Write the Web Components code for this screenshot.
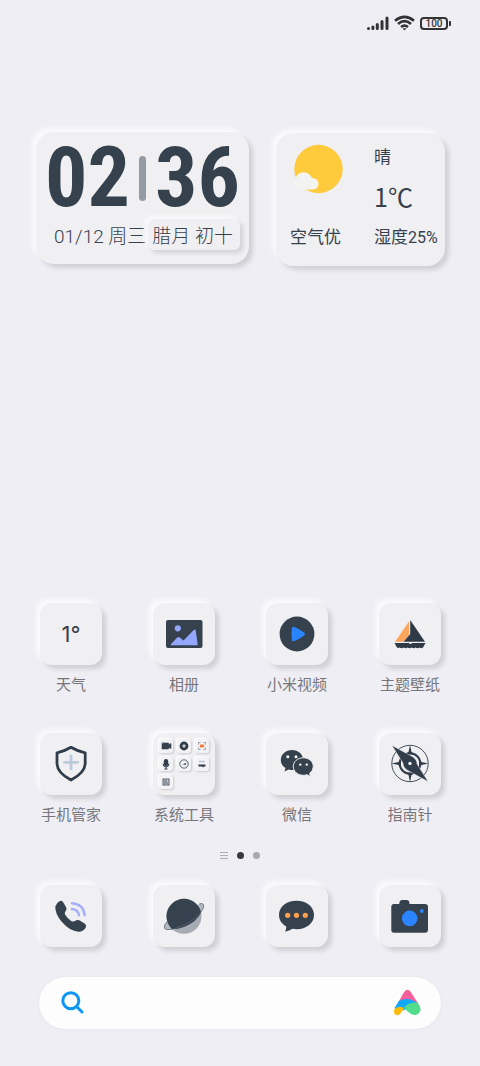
<!DOCTYPE html>
<html lang="zh-CN">
<head>
<meta charset="utf-8">
<meta name="viewport" content="width=device-width, initial-scale=1">
<title>主屏幕</title>
<style>
  html, body { margin: 0; }
  body {
    --ink: #36414e;
    --surface: #f0f0f2;
    --raised: 4px 4px 4px rgba(40, 40, 50, .15), -4px -4px 4px #fafafc;
    background: #efeef4;
    color: var(--ink);
    font-family: Roboto, "Noto Sans CJK SC", sans-serif;
  }
</style>
</head>
<body>
<home-screen>
  <status-bar slot="status" battery="100"></status-bar>
  <clock-widget slot="widgets" hours="02" minutes="36" date="01/12 周三" lunar="腊月 初十"></clock-widget>
  <weather-widget slot="widgets" sky="晴" temp="1℃" air="空气优" humidity="25%"></weather-widget>

  <app-tile slot="apps" label="天气"><span>1°</span></app-tile>
  <app-tile slot="apps" label="相册">
    <svg viewBox="0 0 62 62"><rect x="13" y="17" width="36.5" height="28" rx="2" fill="#36414e"/><circle cx="24.8" cy="25.3" r="3.1" fill="#93a6fb"/><path d="M17.7 41.5 24 34.7q1.3-1.3 2.8-.2l3.7 3L41 26.8q1.3-1 1.7.6l2 14.1q0 .8-.8.8H18.3q-1-.1-.6-.8Z" fill="#93a6fb"/></svg>
  </app-tile>
  <app-tile slot="apps" label="小米视频">
    <svg viewBox="0 0 62 62"><circle cx="31" cy="31" r="17.4" fill="#36414e"/><path d="M25.8 25.5q.1-2.5 2.4-1.6 5.500 2 10 5.600 1.600 1.500 0 3-4.500 3.600-10 5.600-2.300.9-2.400-1.600-.5-5.500 0-11Z" fill="#2b84ff"/></svg>
  </app-tile>
  <app-tile slot="apps" label="主题壁纸">
    <svg viewBox="0 0 62 62"><path d="M30 18.500V32L24.600 38.800H16Z" fill="#ffa55c"/><path d="M31.200 17 46 38.800H24.600L31.200 31Z" fill="#2f3a47"/><path d="M15.500 40H30.500V41H32.500V40H46.500L44 44.500q-2 1.300-3.500 0-1.800 1.600-4 0-1.800 1.600-4 0-1.800 1.600-4 0-1.800 1.600-4 0-1.800 1.600-4 0-1.500.8-2.500 0Z" fill="#2f3a47"/></svg>
  </app-tile>
  <app-tile slot="apps" label="手机管家">
    <svg viewBox="0 0 62 62" fill="none" stroke-linejoin="round"><path d="M31 14.300Q37.500 18.300 45.200 19.800V31Q44.500 40 31 47 17.500 40 17 31V19.800Q24.500 18.300 31 14.300Z" stroke="#303c4a" stroke-width="2.800"/><path d="M31 21.700V37M23.300 29.300H38.700" stroke="#bccbdc" stroke-width="2.800"/></svg>
  </app-tile>
  <app-tile slot="apps" label="系统工具">
    <mini-grid>
      <svg viewBox="0 0 14 14"><path d="M3 4H9.500V5.500L12 4.500V9.500L9.500 8.500V10H3Z" fill="#36414e" stroke="#36414e" stroke-width=".6"/><path d="M3 4H5" stroke="#7c8fa5"/></svg>
      <svg viewBox="0 0 14 14"><circle cx="7" cy="7" r="4.400" fill="#303c4a"/><path d="M7 5.200V8.800M5.200 7H8.800" stroke="#eef0f3" stroke-width="1.200"/></svg>
      <svg viewBox="0 0 14 14"><path d="M3.500 5.500V3.500H5.500M8.500 3.500H10.500V5.500M10.500 8.500V10.500H8.500M5.500 10.500H3.500V8.500" fill="none" stroke="#8896a5" stroke-width=".9"/><rect x="4.800" y="5.500" width="4.400" height="3" rx="1" fill="#f07a35"/></svg>
      <svg viewBox="0 0 14 14"><rect x="4.800" y="2" width="4.400" height="7.200" rx="2.200" fill="#303c4a"/><path d="M4 6.500Q4 10 7 10T10 6.500M7 10V12M5.500 12H8.500" fill="none" stroke="#303c4a"/></svg>
      <svg viewBox="0 0 14 14"><circle cx="7" cy="7" r="4.200" fill="none" stroke="#4a5664" stroke-width=".9"/><path d="M4.800 8.200 9.400 5.600 8.400 8.200 7 7.500Z" fill="#303c4a"/></svg>
      <svg viewBox="0 0 14 14"><path d="M4 4.500H10" stroke="#b9c6d5" stroke-width="1.500"/><path d="M3.500 7.500H10.500V9.500H9L8 10.500 7 9.500H3.500Z" fill="#303c4a"/></svg>
      <svg viewBox="0 0 14 14"><rect x="4" y="4" width="6" height="6" fill="#c7cbd0" stroke="#4a5664" stroke-width=".9"/><path d="M5 6H8M5 8H9" stroke="#4a5664" stroke-width=".9"/></svg>
    </mini-grid>
  </app-tile>
  <app-tile slot="apps" label="微信">
    <svg viewBox="0 0 62 62"><path d="M26 17C19.500 17 14.800 21.500 14.800 27 14.800 30.500 16.600 33.300 19.500 35L18.500 38.500 22.500 36.400Q27 37.600 30.500 36.500 37 34 37.300 27C37 21.300 32.300 17 26 17Z" fill="#36414e"/><path d="M37.300 24.800C31.500 24.800 27.300 28.600 27.300 33.500 27.300 38.500 31.700 42.300 37.300 42.300Q39.300 42.300 41 41.700L44.300 43.700 43.700 40.300Q47.300 37.600 47.300 33.500C47.300 28.600 43 24.800 37.300 24.800Z" fill="#36414e" stroke="#f0f0f2" stroke-width="1"/><g fill="#fff"><circle cx="21.800" cy="23.700" r="1.500"/><circle cx="30" cy="23.700" r="1.500"/><circle cx="34.300" cy="31.600" r="1.200"/><circle cx="40.800" cy="31.600" r="1.200"/></g></svg>
  </app-tile>
  <app-tile slot="apps" label="指南针">
    <svg viewBox="0 0 62 62"><g fill="none" stroke="#303c4a"><circle cx="31" cy="30.500" r="18.200" stroke-width=".9"/><circle cx="31" cy="30.500" r="10.300" stroke-width="2"/></g><path d="M31 12 32.500 19 36 21.500H26L29.500 19ZM31 49 32.500 42 36 39.500H26L29.500 42ZM12.500 30.500 19.500 29 22 25.500V35.500L19.500 32ZM49.500 30.500 42.500 29 40 25.500V35.500L42.500 32Z" fill="#303c4a"/><path d="M13 12.500 34 24Q38 27 38 31L49 48.500 28 37Q24 34 24 30Z" fill="#303c4a" stroke="#f0f0f2" stroke-width=".4"/><circle cx="31" cy="30.500" r="1.700" fill="#f0f0f2"/></svg>
  </app-tile>

  <page-dots slot="dots"></page-dots>

  <app-tile slot="dock" name="电话">
    <svg viewBox="0 0 62 62"><path d="M19.500 16.200Q21.500 15.200 23 17L26.300 22.500Q27 24.500 25.500 26.300 24 28 25.300 30 27.500 33.500 31.500 36.200 33.600 37.200 35.300 35.800 37 34.300 39.300 35.300L45 38.800Q46.700 40.300 45.800 42.500 43.800 46.600 38.500 46.700 29.500 46 21.500 36.500 15 28.500 15.300 21.500 16 18 19.500 16.200Z" fill="#36414e"/><g fill="none" stroke="#a7aef9" stroke-width="2.500" stroke-linecap="round"><path d="M32 18.200Q43.500 19 44.600 30.200"/><path d="M32 24Q38 24.500 39 30.200"/></g></svg>
  </app-tile>
  <app-tile slot="dock" name="浏览器">
    <svg viewBox="0 0 62 62"><defs><clipPath id="upper"><path d="M0 0H62V14L49 26Q44 37 31 42 22 45.500 10 43.500H0Z"/></clipPath></defs><circle cx="31" cy="31.300" r="17.500" fill="#a7acb4"/><circle cx="31" cy="31.300" r="17.500" fill="#36414e" clip-path="url(#upper)"/><path d="M46.500 18.800Q49.800 18 50.600 19.800 51.500 24 44 31.500 34 40.500 20 44 12.500 45.500 11.400 43 10.800 39.500 14.800 36" fill="#36414e" fill-opacity=".3" stroke="#59636f" stroke-width=".8"/></svg>
  </app-tile>
  <app-tile slot="dock" name="短信">
    <svg viewBox="0 0 62 62"><path d="M30.500 15.800C20.500 15.800 13 21.800 13 30 13 35 15.800 39 20.300 41.500Q20.500 44 19 46.800 23.500 46 26.500 43.800 28.500 44.200 30.500 44.200C40.500 44.200 48 38.200 48 30S40.500 15.800 30.500 15.800Z" fill="#36414e"/><g fill="#ffa04f"><circle cx="21.700" cy="30.300" r="2.600"/><circle cx="30.500" cy="30.300" r="2.600"/><circle cx="39.300" cy="30.300" r="2.600"/></g></svg>
  </app-tile>
  <app-tile slot="dock" name="相机">
    <svg viewBox="0 0 62 62"><path d="M15 19H20.300V18Q20.500 15 23.500 15H27.500Q30.300 15 30.500 18V19H46Q49 19 49 22V44.700Q49 47.700 46 47.700H15Q12.300 47.700 12.300 44.700V22Q12.300 19 15 19Z" fill="#36414e"/><circle cx="30.700" cy="33.400" r="7.800" fill="#2b84ff"/><circle cx="42.800" cy="26" r="2" fill="#2b84ff"/></svg>
  </app-tile>

  <search-bar slot="search"></search-bar>
</home-screen>

<script>
const define = (name, html, setup) => customElements.define(name, class extends HTMLElement {
  constructor() {
    super();
    this.attachShadow({ mode: 'open' }).innerHTML = html;
  }
  connectedCallback() {
    this.shadowRoot.querySelectorAll('[data-attr]').forEach(el => {
      el.textContent = this.getAttribute(el.dataset.attr) || '';
    });
    if (setup) setup(this);
  }
});

define('home-screen', `
  <style>
    :host { display: flex; flex-direction: column; min-height: 100vh; box-sizing: border-box; padding-bottom: 37px; }
    .widgets { display: grid; grid-template-columns: minmax(0, 213fr) minmax(0, 169fr); gap: 27px; margin: 86px 35px 0 36px; align-items: start; }
    .apps, .dock { display: grid; grid-template-columns: repeat(4, 62px); justify-content: space-between; margin: 0 39px 0 40px; row-gap: 38px; }
    .apps { margin-top: auto; padding-top: 38px; }
    .dots { margin: 26px 0; }
    .search { margin: 30px 39px 0; }
  </style>
  <slot name="status"></slot>
  <section class="widgets"><slot name="widgets"></slot></section>
  <main class="apps"><slot name="apps"></slot></main>
  <div class="dots"><slot name="dots"></slot></div>
  <nav class="dock"><slot name="dock"></slot></nav>
  <div class="search"><slot name="search"></slot></div>`);

define('status-bar', `
  <style>
    :host { display: flex; height: 46px; align-items: center; justify-content: flex-end; gap: 5px; padding-right: 29px; color: #333; }
    svg { display: block; }
    .battery { display: flex; align-items: center; gap: 1px; }
    .cell { box-sizing: border-box; width: 28px; height: 13px; border: 2px solid; border-radius: 4px; font: 500 10px/10px Roboto, sans-serif; text-align: center; }
    .cap { width: 2px; height: 5px; border-radius: 0 1px 1px 0; background: currentColor; }
  </style>
  <svg width="22" height="14" viewBox="0 0 22 14" stroke="currentColor" stroke-width="3" stroke-linecap="round"><path d="M1.500 12.500V12.400M5.900 12.500V11M10.300 12.500V8.500M15 12.500V5.500M20 12.500V2"/></svg>
  <svg width="21" height="16" viewBox="0 0 21 16" fill="none" stroke="currentColor" stroke-width="2.600"><path d="M1 5.700Q10.500-2 20 5.700M4 8.900Q10.500 3.500 17 8.900M7 12Q10.500 9.200 14 12"/><path d="M8.500 13.300H12.500L10.500 15.500Z" fill="currentColor" stroke="none"/></svg>
  <div class="battery"><div class="cell" data-attr="battery"></div><div class="cap"></div></div>`);

define('clock-widget', `
  <style>
    :host { display: block; box-sizing: border-box; height: 132px; padding-top: 14px; border-radius: 18px; background: var(--surface); box-shadow: var(--raised); }
    .time { display: flex; align-items: center; justify-content: center; gap: 9px; font: bold 84px/64px "Roboto Condensed", Roboto, sans-serif; }
    .bar { width: 7px; height: 45px; border-radius: 4px; background: #959ba3; }
    .day { display: flex; align-items: center; justify-content: space-between; margin: 9px 9px 0 18px; font-size: 19px; font-weight: 300; line-height: 26px; white-space: pre; }
    .day span { padding-top: 5px; }
    .day .lunar { padding: 5px 7px 0 4px; border-radius: 6px; background: var(--surface); box-shadow: 3px 3px 4px rgba(40, 40, 50, .14), -3px -3px 4px #fafafc; }
  </style>
  <div class="time"><span data-attr="hours"></span><i class="bar"></i><span data-attr="minutes"></span></div>
  <div class="day"><span data-attr="date"></span><span class="lunar" data-attr="lunar"></span></div>`);

define('weather-widget', `
  <style>
    :host { display: grid; box-sizing: border-box; height: 133px; margin-top: 1px; padding: 3px 0 0 14px; grid-template: repeat(3, 40px) / 84px 1fr; border-radius: 18px; background: var(--surface); box-shadow: var(--raised); font-family: "Noto Sans CJK SC", sans-serif; font-size: 17px; line-height: 40px; white-space: nowrap; }
    svg { grid-row: span 2; width: 50px; height: 50px; margin: 8px 0 0 3px; }
    .temp { font-size: 25px; }
    small { font: 400 16px/1 Roboto, sans-serif; }
  </style>
  <svg viewBox="0 0 50 50"><circle cx="25.500" cy="25" r="24.200" fill="#ffcb3c"/><path d="M7 45.500Q1 44 1 39 1.500 35 3 33.500 4.500 28.500 10.500 28.200 16.500 28.500 19 34H20Q25.500 35 25.500 40 25 45 20.500 45.500H13Q9 47 7 45.500Z" fill="#f3f4f1"/></svg>
  <span data-attr="sky"></span>
  <span class="temp" data-attr="temp"></span>
  <span data-attr="air"></span>
  <span>湿度<small data-attr="humidity"></small></span>`);

define('app-tile', `
  <style>
    :host { display: block; }
    button { display: block; width: 62px; margin: 0; padding: 0; border: 0; background: none; color: inherit; font: inherit; }
    .tile { display: flex; align-items: center; justify-content: center; height: 62px; border-radius: 12px; background: var(--surface); box-shadow: var(--raised); font: 400 22px/62px Inter, Roboto, sans-serif; }
    .label { display: flex; justify-content: center; margin-top: 10px; font-size: 15px; line-height: 20px; color: #76767a; white-space: nowrap; }
    ::slotted(svg) { display: block; width: 62px; height: 62px; }
  </style>
  <button type="button"><span class="tile"><slot></slot></span></button>`, el => {
  const button = el.shadowRoot.querySelector('button');
  if (el.hasAttribute('label')) {
    const label = document.createElement('span');
    label.className = 'label';
    label.textContent = el.getAttribute('label');
    button.append(label);
  } else {
    button.setAttribute('aria-label', el.getAttribute('name'));
  }
});

define('mini-grid', `
  <style>
    :host { display: grid; grid-template-columns: repeat(3, 14px); gap: 4px; }
    ::slotted(svg) { display: block; width: 14px; height: 14px; border-radius: 3px; background: #f3f3f5; box-shadow: 1px 1px 2px rgba(40, 40, 50, .18), -1px -1px 1px #fff; }
  </style>
  <slot></slot>`);

define('page-dots', `
  <style>
    :host { display: flex; align-items: center; justify-content: center; gap: 9px; height: 8px; }
    .menu { width: 8px; height: 5px; border: solid #aeaeb3; border-width: 1px 0; background: linear-gradient(#aeaeb3, #aeaeb3) center / 8px 1px no-repeat; }
    .dot { width: 7px; height: 7px; border-radius: 50%; background: #a9a8ae; }
    .on { background: #3a3a3e; }
  </style>
  <i class="menu"></i><i class="dot on"></i><i class="dot"></i>`);

define('search-bar', `
  <style>
    :host { display: block; }
    form { display: flex; align-items: center; height: 52px; box-sizing: border-box; padding: 0 20px 0 21px; border-radius: 26px; background: #fdfdfd; box-shadow: 0 0 2px rgba(40, 40, 60, .1); }
    label, svg { display: block; }
    input { flex: 1; min-width: 0; height: 40px; padding: 0 10px; border: 0; outline: 0; background: none; font: 16px "Noto Sans CJK SC", sans-serif; }
    button { padding: 0; border: 0; background: none; }
  </style>
  <form>
    <label for="q" aria-label="搜索"><svg width="26" height="26" viewBox="0 0 26 26" fill="none" stroke="#0c97f7" stroke-width="3" stroke-linecap="round"><circle cx="10.800" cy="10.700" r="8"/><path d="M17 17 22 22"/></svg></label>
    <input id="q" type="text">
    <button type="button" aria-label="助手"><svg width="28" height="28" viewBox="0 0 28 28"><path d="M5 14 10.500 4Q14-2 17.800 3L24.500 13.500V17L5 16Z" fill="#f4609c"/><path d="M1.500 19 6 11.800Q13 8.500 20 11.500 24.500 13 26.500 18L14 20 5 23Z" fill="#12a9fb"/><path d="M1 21Q3 17.500 8 18 10.500 18 11 19.500L7.500 24.500Q5 27.500 2 25.500 .3 23.500 1 21Z" fill="#fdbb0c"/><path d="M11 18.700Q15 14 21 13.500H24.500Q28.500 18.500 27.300 22 25 27 20 25.800 17 25 11 18.700Z" fill="#52dd8d"/></svg></button>
  </form>`);
</script>
</body>
</html>
